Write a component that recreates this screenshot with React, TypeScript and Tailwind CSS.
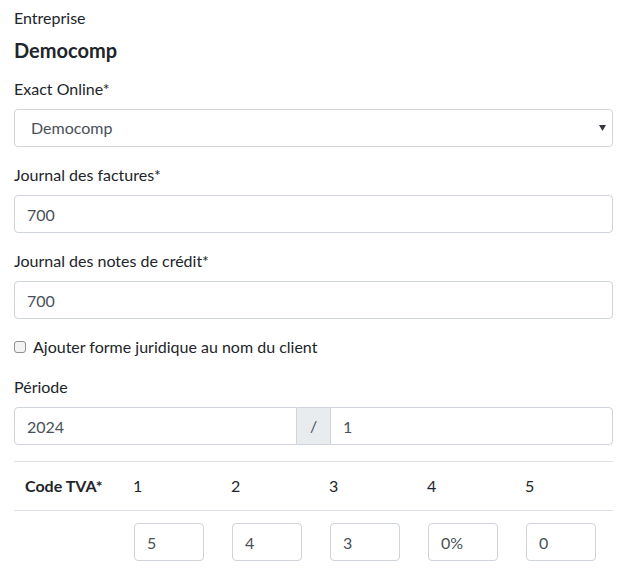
import React from "react"

const inputCls = "h-[38px] w-full rounded-[4px] border border-[#ced4da] bg-white px-3 text-[16px] text-[#495057] outline-none"

function Field({ label, value }: { label: string, value: string }) {
    return (
        <div className="mb-4">
            <label className="mb-2 block leading-6">{label}</label>
            <input className={inputCls} defaultValue={value} />
        </div>
    )
}

export default function App() {
    const codes = ["5", "4", "3", "0%", "0"]

    return (
        <div className="min-h-[579px] bg-white pl-[14px] pr-[26px] pt-[6px] text-[16px] text-[#212529] [font-family:Lato,'Open_Sans',sans-serif]">
            <div className="leading-6">Entreprise</div>
            <div className="mt-2 text-[20px] font-bold leading-6">Democomp</div>

            <div className="mt-[15px] mb-4">
                <label className="mb-2 block leading-6">Exact Online*</label>
                <div className="relative">
                    <div className={`${inputCls} flex items-center pl-4`}>Democomp</div>
                    <svg className="absolute right-[7px] top-[16px]" width="7" height="6" viewBox="0 0 7 6">
                        <path d="M0 0h7L3.5 6z" fill="#343a40" />
                    </svg>
                </div>
            </div>

            <Field label="Journal des factures*" value="700" />
            <Field label="Journal des notes de crédit*" value="700" />

            <div className="mb-4 flex h-6 items-center gap-2">
                <span className="h-[12px] w-[12px] rounded-[3px] border border-[#8f8f8f] bg-[#f3f3f3]" />
                <span className="ml-[-1px]">Ajouter forme juridique au nom du client</span>
            </div>

            <div className="mb-4">
                <label className="mb-2 block leading-6">Période</label>
                <div className="flex h-[38px] text-[#495057]">
                    <input className="h-full min-w-0 flex-1 rounded-l-[4px] border border-[#ced4da] px-3 outline-none" defaultValue="2024" />
                    <div className="flex w-[33px] items-center justify-center border-y border-[#ced4da] bg-[#e9ecef]">/</div>
                    <input className="h-full min-w-0 flex-1 rounded-r-[4px] border border-[#ced4da] px-3 outline-none" defaultValue="1" />
                </div>
            </div>

            <div className="border-t border-[#dee2e6]">
                <div className="grid grid-cols-[109px_repeat(5,98px)] border-b border-[#dee2e6] py-3 leading-6">
                    <div className="pl-[11px] font-bold">Code TVA*</div>
                    {[1, 2, 3, 4, 5].map(n => (
                        <div key={n} className="pl-[10px]">{n}</div>
                    ))}
                </div>
                <div className="grid grid-cols-[109px_repeat(5,98px)] pt-3">
                    <div />
                    {codes.map((c, i) => (
                        <div key={i} className="pl-[11px]">
                            <input className="h-[38px] w-[70px] rounded-[4px] border border-[#ced4da] px-3 text-[#495057] outline-none" defaultValue={c} />
                        </div>
                    ))}
                </div>
            </div>
        </div>
    )
}
